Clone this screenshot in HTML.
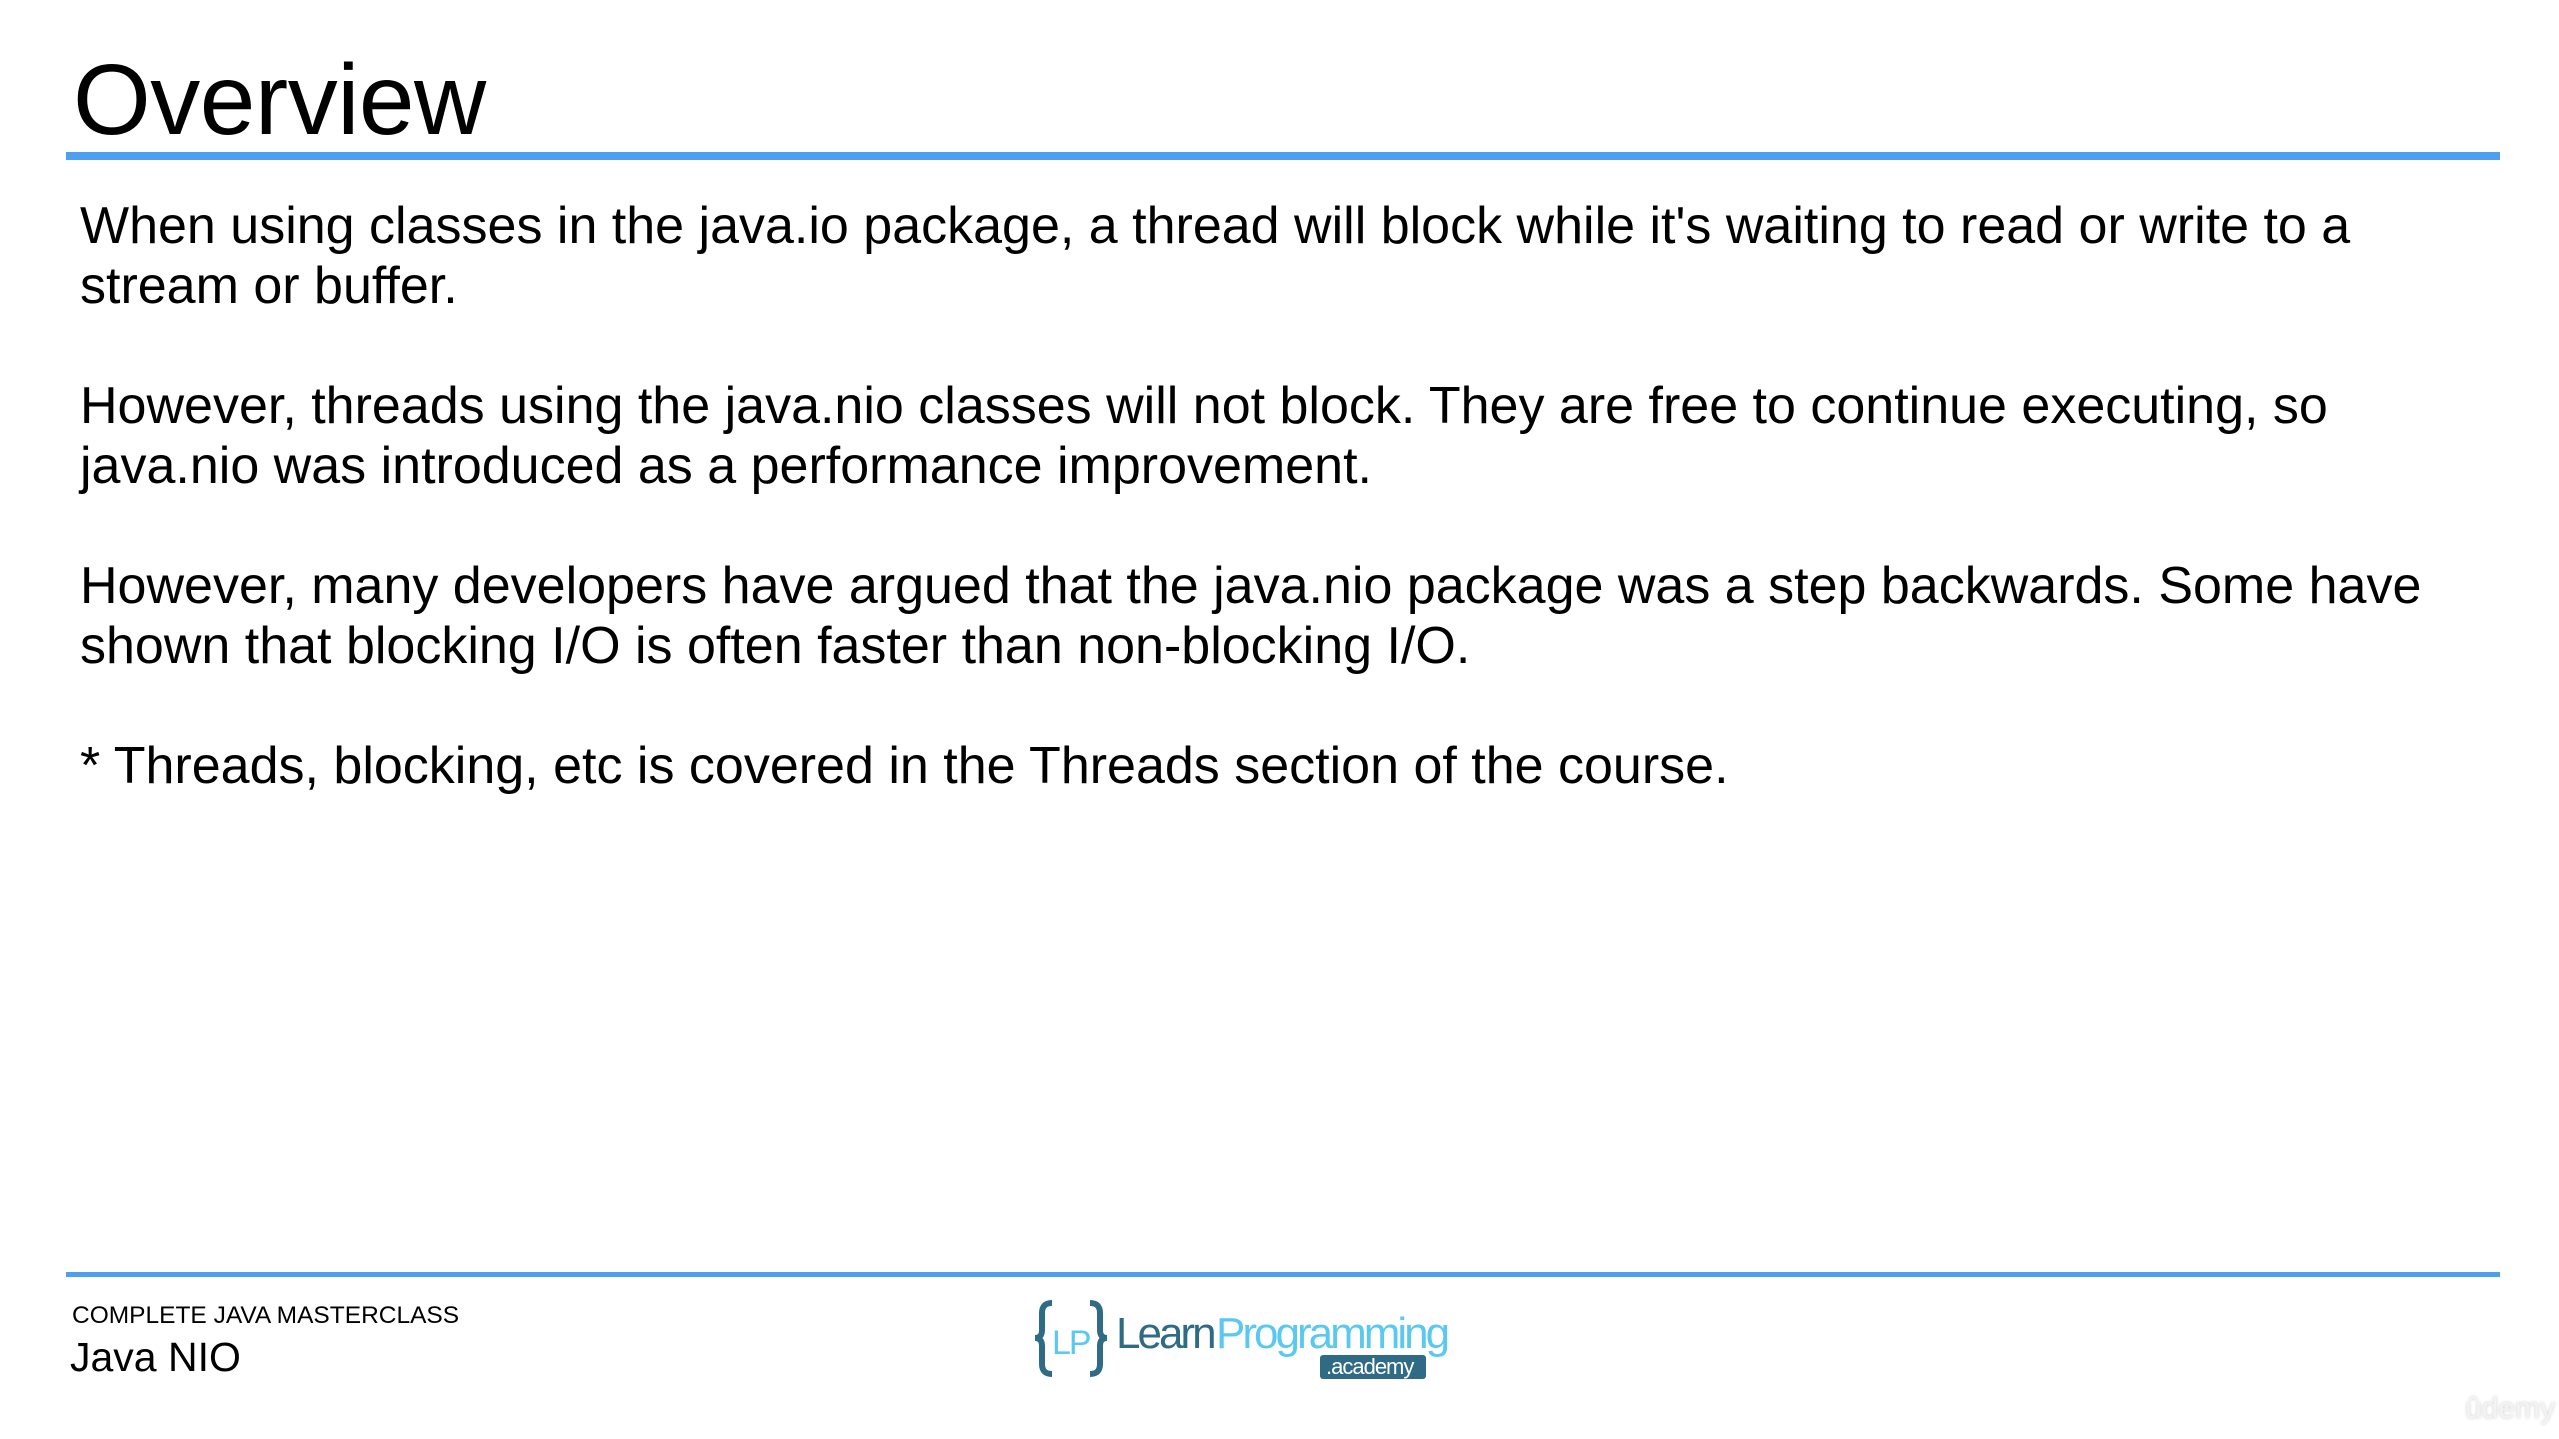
<!DOCTYPE html>
<html><head><meta charset="utf-8"><style>
html,body{margin:0;padding:0;background:#fff;}
body{width:2559px;height:1439px;position:relative;overflow:hidden;font-family:"Liberation Sans",sans-serif;color:#000;}
.t{position:absolute;left:73px;top:40px;font-size:100px;line-height:120px;letter-spacing:-0.5px;}
.bar{position:absolute;left:66px;width:2434px;background:#4e9ff0;}
.p{position:absolute;left:80px;font-size:52px;line-height:60px;white-space:nowrap;letter-spacing:0px;}
.s{position:absolute;left:72px;top:1300px;font-size:24.5px;line-height:32px;}
.n{position:absolute;left:70px;top:1331px;font-size:41px;line-height:52px;}
</style></head><body>
<div class="t">Overview</div>
<div class="bar" style="top:152px;height:8px"></div>
<div class="p" style="top:196px">When using classes in the java.io package, a thread will block while it's waiting to read or write to a<br>stream or buffer.</div>
<div class="p" style="top:376px">However, threads using the java.nio classes will not block. They are free to continue executing, so<br>java.nio was introduced as a performance improvement.</div>
<div class="p" style="top:556px">However, many developers have argued that the java.nio package was a step backwards. Some have<br>shown that blocking I/O is often faster than non-blocking I/O.</div>
<div class="p" style="top:736px">* Threads, blocking, etc is covered in the Threads section of the course.</div>
<div class="bar" style="top:1272px;height:5px"></div>
<div class="s">COMPLETE JAVA MASTERCLASS</div>
<div class="n">Java NIO</div>
<svg style="position:absolute;left:1030px;top:1298px" width="440" height="90" viewBox="0 0 440 90">
<path d="M22 5 Q12 5 12 15 L12 32 Q12 40 5 40 Q12 40 12 48 L12 66 Q12 76 22 76" fill="none" stroke="#2f6b84" stroke-width="6"/>
<path d="M60 5 Q70 5 70 15 L70 32 Q70 40 77 40 Q70 40 70 48 L70 66 Q70 76 60 76" fill="none" stroke="#2f6b84" stroke-width="6"/>
<text x="22" y="56" font-family="Liberation Sans" font-size="34" fill="#5bc8f0" letter-spacing="-2">LP</text>
<text x="86" y="50" font-family="Liberation Sans" font-size="44" fill="#2f6b84" letter-spacing="-3">Learn</text>
<text x="186" y="50" font-family="Liberation Sans" font-size="44" fill="#5bc8f0" letter-spacing="-3">Programming</text>
<rect x="290" y="57" width="106" height="24" rx="3" fill="#2f6b84"/>
<text x="296" y="76" font-family="Liberation Sans" font-size="22" fill="#fff" letter-spacing="-1">.academy</text>
</svg>
<div style="position:absolute;left:2465px;top:1392px;font-size:30px;color:#f3f3f3;text-shadow:0 0 3px #ccc">ûdemy</div>
</body></html>
